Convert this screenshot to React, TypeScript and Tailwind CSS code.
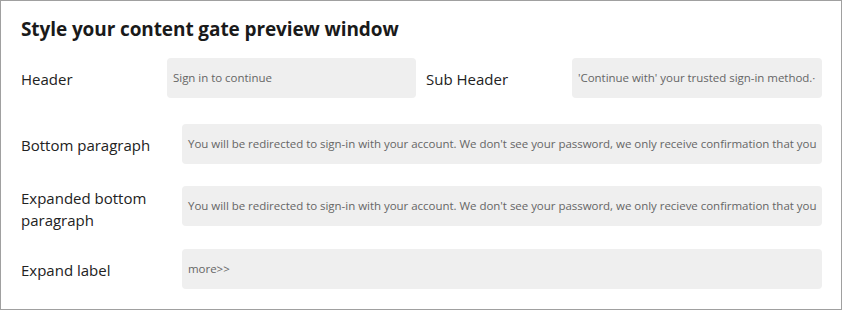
import React from "react";

const font = { fontFamily: '"Open Sans", "Noto Sans", sans-serif' };

function Field({ value, className = "" }: { value: string; className?: string }) {
  return (
    <div
      className={`h-[40px] rounded-[4px] bg-[#efefef] px-[6px] flex items-center overflow-hidden whitespace-nowrap text-[11.5px] tracking-[-0.03px] text-[#666] ${className}`}
    >
      <span className="pb-[1px]">{value}</span>
    </div>
  );
}

export default function App() {
  return (
    <div style={font} className="w-[842px] h-[310px] border border-[#a0a0a0] bg-white pl-[20px] pr-[19px] pt-[14px] text-[#222]">
      <h1 className="text-[19px] font-bold leading-[28px] text-[#1a1a1a] tracking-[-0.1px]">
        Style your content gate preview window
      </h1>
      <div className="mt-[15px] flex items-center h-[40px]">
        <div className="w-[146px] text-[15px] pt-[3px]">Header</div>
        <Field className="w-[249px]" value="Sign in to continue" />
        <div className="w-[146px] ml-[10px] text-[15px] pt-[3px]">Sub Header</div>
        <Field className="w-[250px]" value="'Continue with' your trusted sign-in method.·" />
      </div>
      <div className="mt-[26px] flex items-center h-[40px]">
        <div className="w-[161px] text-[15px] pt-[3px]">Bottom paragraph</div>
        <Field
          className="flex-1"
          value="You will be redirected to sign-in with your account. We don't see your password, we only receive confirmation that you"
        />
      </div>
      <div className="mt-[22px] flex items-start h-[40px]">
        <div className="w-[161px] text-[15px] leading-[22px] pt-[1px]">
          Expanded bottom
          <br />
          paragraph
        </div>
        <Field
          className="flex-1"
          value="You will be redirected to sign-in with your account. We don't see your password, we only recieve confirmation that you"
        />
      </div>
      <div className="mt-[23px] flex items-center h-[40px]">
        <div className="w-[161px] text-[15px] pt-[3px]">Expand label</div>
        <Field className="flex-1" value="more>>" />
      </div>
    </div>
  );
}
